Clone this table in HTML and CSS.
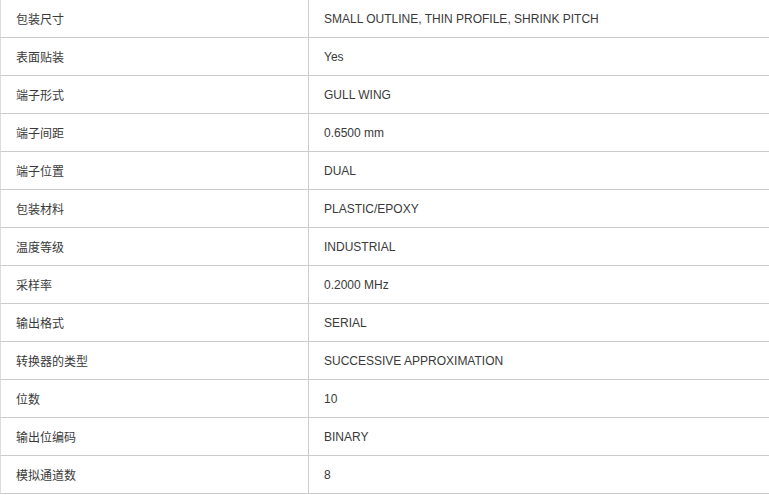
FILE: index.html
```html
<!DOCTYPE html>
<html>
<head>
<meta charset="utf-8">
<link rel="stylesheet" href="styles.css">
</head>
<body>
<table class="spec">
<tbody>
<tr><td class="k">包装尺寸</td><td class="v">SMALL OUTLINE, THIN PROFILE, SHRINK PITCH</td></tr>
<tr><td class="k">表面贴装</td><td class="v">Yes</td></tr>
<tr><td class="k">端子形式</td><td class="v">GULL WING</td></tr>
<tr><td class="k">端子间距</td><td class="v">0.6500 mm</td></tr>
<tr><td class="k">端子位置</td><td class="v">DUAL</td></tr>
<tr><td class="k">包装材料</td><td class="v">PLASTIC/EPOXY</td></tr>
<tr><td class="k">温度等级</td><td class="v">INDUSTRIAL</td></tr>
<tr><td class="k">采样率</td><td class="v">0.2000 MHz</td></tr>
<tr><td class="k">输出格式</td><td class="v">SERIAL</td></tr>
<tr><td class="k">转换器的类型</td><td class="v">SUCCESSIVE APPROXIMATION</td></tr>
<tr><td class="k">位数</td><td class="v">10</td></tr>
<tr><td class="k">输出位编码</td><td class="v">BINARY</td></tr>
<tr><td class="k">模拟通道数</td><td class="v">8</td></tr>
</tbody>
</table>
</body>
</html>
```
FILE: styles.css
```css
html, body {
  margin: 0;
  padding: 0;
  background: #fff;
}
body {
  font-family: "Liberation Sans", Arial, "Noto Sans CJK SC", sans-serif;
  font-size: 12px;
  color: #3a3a3a;
}
.spec {
  border-collapse: separate;
  border-spacing: 0;
  width: 770px;
  table-layout: fixed;
}
.spec td {
  height: 38px;
  padding: 0 0 0 15px;
  border-bottom: 1px solid #ccc;
  vertical-align: middle;
  box-sizing: border-box;
  white-space: nowrap;
}
.spec td.k {
  width: 309px;
  border-left: 1px solid #ddd;
  border-right: 1px solid #ccc;
}
.spec td.v .t,
.spec td.v {
  line-height: 14px;
}
```
